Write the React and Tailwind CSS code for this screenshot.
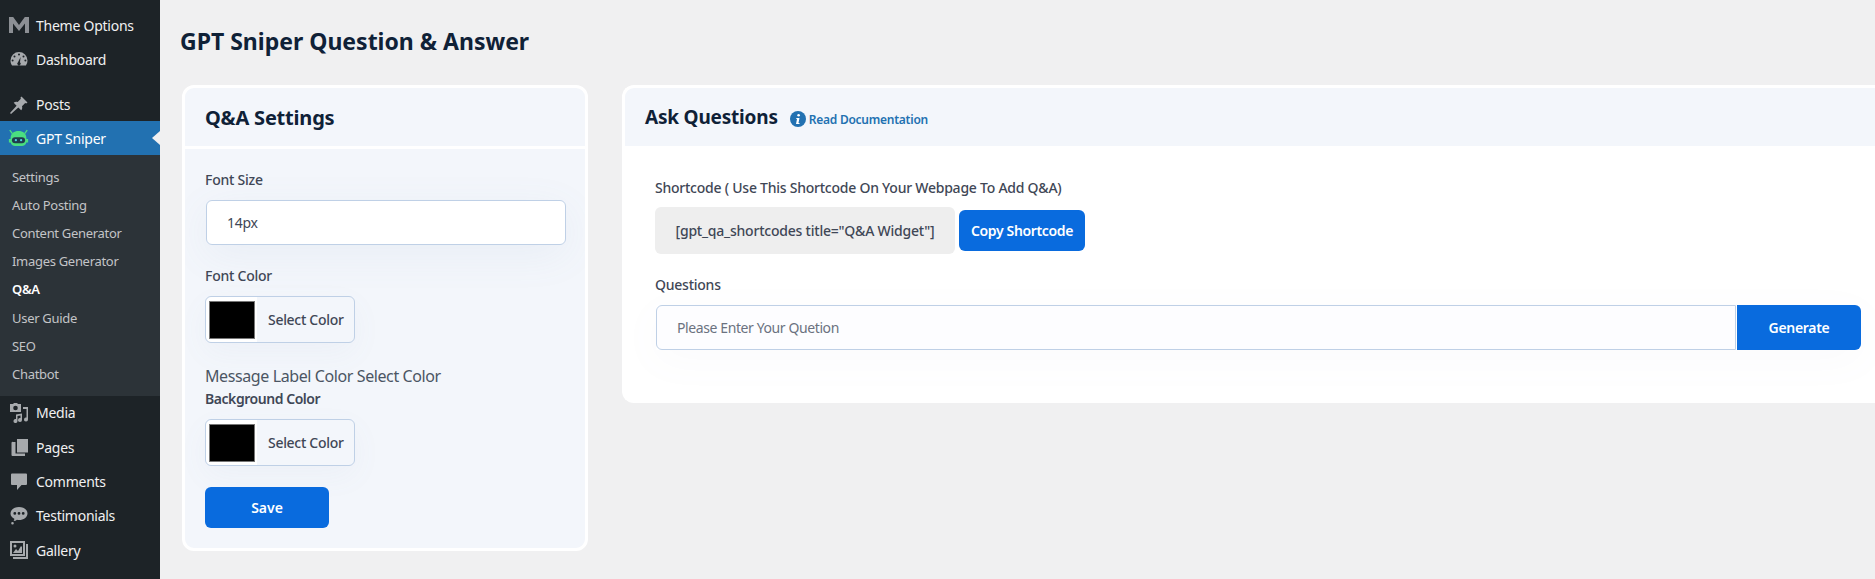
const F = "font-['Noto_Sans','Open_Sans',sans-serif]";

const Ico = ({ children }) => (
  <svg viewBox="0 0 20 20" className="w-5 h-5 shrink-0 fill-[#a7aaad]">{children}</svg>
);

const icons = {
  m: <path d="M0 18V2h4.200L10 10l5.800-8H20v16h-4V8.400L10 16 4 8.400V18z" fill="#8c8f94" />,
  dash: <path fillRule="evenodd" d="M10 3a8.500 8.500 0 0 0-8.500 8.500c0 2 .6 3.700 1.600 5h13.800a8.400 8.400 0 0 0 1.600-5A8.500 8.500 0 0 0 10 3zM10 4.600a1 1 0 1 1 0 2 1 1 0 0 1 0-2zM5.500 6.400a1 1 0 1 1 0 2 1 1 0 0 1 0-2zm9 0a1 1 0 1 1 0 2 1 1 0 0 1 0-2zM3.600 10.400a1 1 0 1 1 0 2 1 1 0 0 1 0-2zm12.800 0a1 1 0 1 1 0 2 1 1 0 0 1 0-2zM11.600 8l-.6 5.200a1.700 1.700 0 1 1-2 0z" />,
  pin: <path d="M12.500 1.500l6 6-1.300 1.100-1-.5-3.200 3.200c.5 1.500.2 3-.8 4L9.300 12.400 2 19l-1-1 6.600-7.300L4.700 7.800c1-1 2.500-1.300 4-.8l3.200-3.200-.5-1z" />,
  media: <g>
    <path fillRule="evenodd" d="M1 1h3l1-1h3l1 1h3v8H1zm5.500 1.700a2.300 2.300 0 1 0 0 4.600 2.300 2.300 0 0 0 0-4.600z" />
    <path d="M14 4h5v12.500a2 2 0 1 1-1.500-1.900V6H14z" />
    <path d="M7 11.500l6-1v6.500a2 2 0 1 1-1.500-1.900v-2.700l-3 .5V18a2 2 0 1 1-1.500-1.900z" />
  </g>,
  pages: <path d="M8 2h11v13.500H8zM4 5h2.500v11.500H16V19H3.500a1 1 0 0 1-1-1V6a1 1 0 0 1 1.500-1z" />,
  comments: <path d="M3 2.500h14a1 1 0 0 1 1 1V13a1 1 0 0 1-1 1h-4.500L8 19v-5H3a1 1 0 0 1-1-1V3.500a1 1 0 0 1 1-1z" />,
  testi: <path fillRule="evenodd" d="M10 1c4.700 0 8.500 2.700 8.500 6.500S14.700 14 10 14c-.7 0-1.400-.1-2-.2-.9.8-2 1.200-3.400 1.300.5-.8.700-1.500.700-2.300C3 11.700 1.500 9.800 1.500 7.500 1.500 3.700 5.300 1 10 1zM5.800 6a1.400 1.400 0 1 0 0 2.800 1.400 1.400 0 0 0 0-2.800zM10 6a1.400 1.400 0 1 0 0 2.800A1.400 1.400 0 0 0 10 6zm4.200 0a1.400 1.400 0 1 0 0 2.800 1.400 1.400 0 0 0 0-2.800zM3.500 16a1.300 1.300 0 1 1 0 2.600 1.300 1.300 0 0 1 0-2.600z" />,
  gallery: <path fillRule="evenodd" d="M1 1h15v15H1zm2 2v11h11V3zm1 10l3-4 2 2 3-5 1 1v6zM6 4.500a1.500 1.500 0 1 1 0 3 1.500 1.500 0 0 1 0-3zM17 4h2v15H4v-2h13z" />,
};

const Item = ({ icon, label, mb = "" }) => (
  <div className={`h-[34.300px] flex items-center pl-[9px] gap-[7px] text-[14px] tracking-[-0.25px] text-[#f0f0f1] ${mb}`}>
    <Ico>{icons[icon]}</Ico>
    <span>{label}</span>
  </div>
);

const Sub = ({ label, active }) => (
  <div className={`h-[28.200px] flex items-center pl-[12px] text-[13px] tracking-[-0.3px] ${active ? "font-semibold text-white" : "text-[#c3c4c7]"}`}>{label}</div>
);

const Label = ({ children, className = "" }) => (
  <div className={`text-[14px] leading-[20px] font-medium tracking-[-0.24px] text-[#3f4756] ${className}`}>{children}</div>
);

const Picker = () => (
  <div className="w-[150px] h-[47px] flex items-center rounded-[6px] border border-[#bfd0e6] shadow-[0_10px_30px_rgba(120,140,180,0.05)]">
    <div className="w-[51px] h-[45px] bg-white flex items-center justify-center rounded-l-[6px] shrink-0">
      <div className="ml-[1px] w-[46px] h-[38px] bg-black border border-[#767676]" />
    </div>
    <span className="ml-[11px] text-[14px] font-medium tracking-[-0.3px] text-[#3f4756] whitespace-nowrap">Select Color</span>
  </div>
);

export default function App() {
  return (
    <div className={`${F} w-[1875px] h-[579px] overflow-hidden flex bg-[#f0f0f1]`}>
      <aside className="w-[160px] h-full bg-[#1d2327] shrink-0 pt-[8px]">
        <Item icon="m" label="Theme Options" />
        <Item icon="dash" label="Dashboard" mb="mb-[11px]" />
        <Item icon="pin" label="Posts" />
        <div className="relative h-[34px] -mt-[0.500px] bg-[#2271b1] flex items-center pl-[8px] gap-[7px] text-[14px] tracking-[-0.25px] text-white">
          <svg viewBox="0 0 24 20" className="w-[21px] h-[18px] shrink-0">
            <path d="M2 1l3 4M22 1l-3 4" stroke="#4ade80" strokeWidth="1.500" />
            <path d="M12 2c5 0 9 3 9 8v1h2v4h-2c-1 3-3 4-5 4H8c-2 0-4-1-5-4H1v-4h2v-1c0-5 4-8 9-8z" fill="#4ade80" />
            <rect x="4.500" y="9" width="15" height="7" rx="3.500" fill="#1f3b4d" />
            <circle cx="9" cy="12.500" r="1.300" fill="#4fd1e8" />
            <circle cx="15" cy="12.500" r="1.300" fill="#4fd1e8" />
          </svg>
          <span>GPT Sniper</span>
          <div className="absolute right-0 top-[10px] w-0 h-0 border-y-[7px] border-y-transparent border-r-[8px] border-r-[#f0f0f1]" />
        </div>
        <div className="bg-[#2c3338] pt-[8px] pb-[6.800px]">
          {["Settings", "Auto Posting", "Content Generator", "Images Generator"].map((s) => <Sub key={s} label={s} />)}
          <Sub label="Q&A" active />
          {["User Guide", "SEO", "Chatbot"].map((s) => <Sub key={s} label={s} />)}
        </div>
        <div>
          <Item icon="media" label="Media" />
          <Item icon="pages" label="Pages" />
          <Item icon="comments" label="Comments" />
          <Item icon="testi" label="Testimonials" />
          <Item icon="gallery" label="Gallery" />
        </div>
      </aside>

      <main className="flex-1 min-w-0 pl-[20px] pt-[24px]">
        <h1 className="text-[23px] leading-[34px] font-bold text-[#0f2137]">GPT Sniper Question &amp; Answer</h1>
        <div className="flex items-start gap-[34px] pl-[2px] mt-[27px]">
          <section className="w-[406px] h-[466px] shrink-0 rounded-[12px] border-[3px] border-white bg-[#f3f6fb] overflow-hidden">
            <div className="h-[61px] border-b-[3px] border-white pl-[20px] pt-[1px] flex items-center text-[20px] tracking-[-0.2px] font-bold text-[#0f2137]">Q&amp;A Settings</div>
            <div className="pl-[20px] pt-[21px]">
              <Label>Font Size</Label>
              <div className="mt-[10px] ml-[1px] w-[360px] h-[45px] bg-white rounded-[6px] border border-[#bfd0e6] flex items-center pl-[20px] text-[14px] tracking-[-0.3px] text-[#3f4756] shadow-[0_10px_40px_rgba(120,140,180,0.08)]">14px</div>
              <Label className="mt-[21px] mb-[10px]">Font Color</Label>
              <Picker />
              <div className="mt-[21px] text-[16px] leading-[24px] tracking-[-0.4px] text-[#4b5563]">Message Label Color Select Color</div>
              <Label className="mt-[1px] mb-[10px] font-semibold !tracking-[-0.45px]">Background Color</Label>
              <Picker />
              <div className="mt-[21px] w-[124px] h-[41px] rounded-[6px] bg-[#096bde] flex items-center justify-center text-[14px] font-semibold text-white">Save</div>
            </div>
          </section>

          <section className="flex-1 min-w-0 h-[318px] rounded-l-[12px] border-y-[3px] border-l-[3px] border-white bg-white overflow-hidden">
            <div className="h-[58px] bg-[#f3f6fb] pl-[20px] pt-[1px] flex items-center">
              <span className="text-[19px] tracking-[-0.2px] font-bold text-[#0f2137]">Ask Questions</span>
              <svg viewBox="0 0 16 16" className="w-4 h-4 ml-[12px] mt-[3px]">
                <circle cx="8" cy="8" r="8" fill="#2271b1" />
                <circle cx="8.600" cy="4.300" r="1.300" fill="#fff" />
                <path d="M6.300 7h3.200l-1 5h1v1H6l1-5H6.300z" fill="#fff" />
              </svg>
              <span className="ml-[3px] mt-[5px] text-[12px] tracking-[-0.25px] font-semibold text-[#2271b1]">Read Documentation</span>
            </div>
            <div className="pl-[30px] pr-[14px] pt-[32px]">
              <Label>Shortcode ( Use This Shortcode On Your Webpage To Add Q&amp;A)</Label>
              <div className="flex items-center mt-[9px] gap-[4px]">
                <div className="w-[300px] h-[47px] rounded-[6px] bg-[#eeeeee] flex items-center justify-center text-[14px] font-medium tracking-[-0.22px] text-[#3f4756] whitespace-nowrap">[gpt_qa_shortcodes title="Q&amp;A Widget"]</div>
                <div className="w-[126px] h-[41px] rounded-[6px] bg-[#096bde] flex items-center justify-center text-[14px] font-semibold tracking-[-0.35px] text-white whitespace-nowrap">Copy Shortcode</div>
              </div>
              <Label className="mt-[21px]">Questions</Label>
              <div className="flex mt-[10px] ml-[1px] gap-[1px] shadow-[0_10px_40px_rgba(120,140,180,0.04)]">
                <div className="flex-1 h-[45px] bg-[#fdfdff] rounded-l-[6px] border border-[#bfd0e6] flex items-center pl-[20px] text-[14px] tracking-[-0.4px] text-[#6b7280]">Please Enter Your Quetion</div>
                <div className="w-[124px] h-[45px] rounded-r-[6px] bg-[#096bde] flex items-center justify-center text-[14px] font-semibold tracking-[-0.3px] text-white">Generate</div>
              </div>
            </div>
          </section>
        </div>
      </main>
    </div>
  );
}
